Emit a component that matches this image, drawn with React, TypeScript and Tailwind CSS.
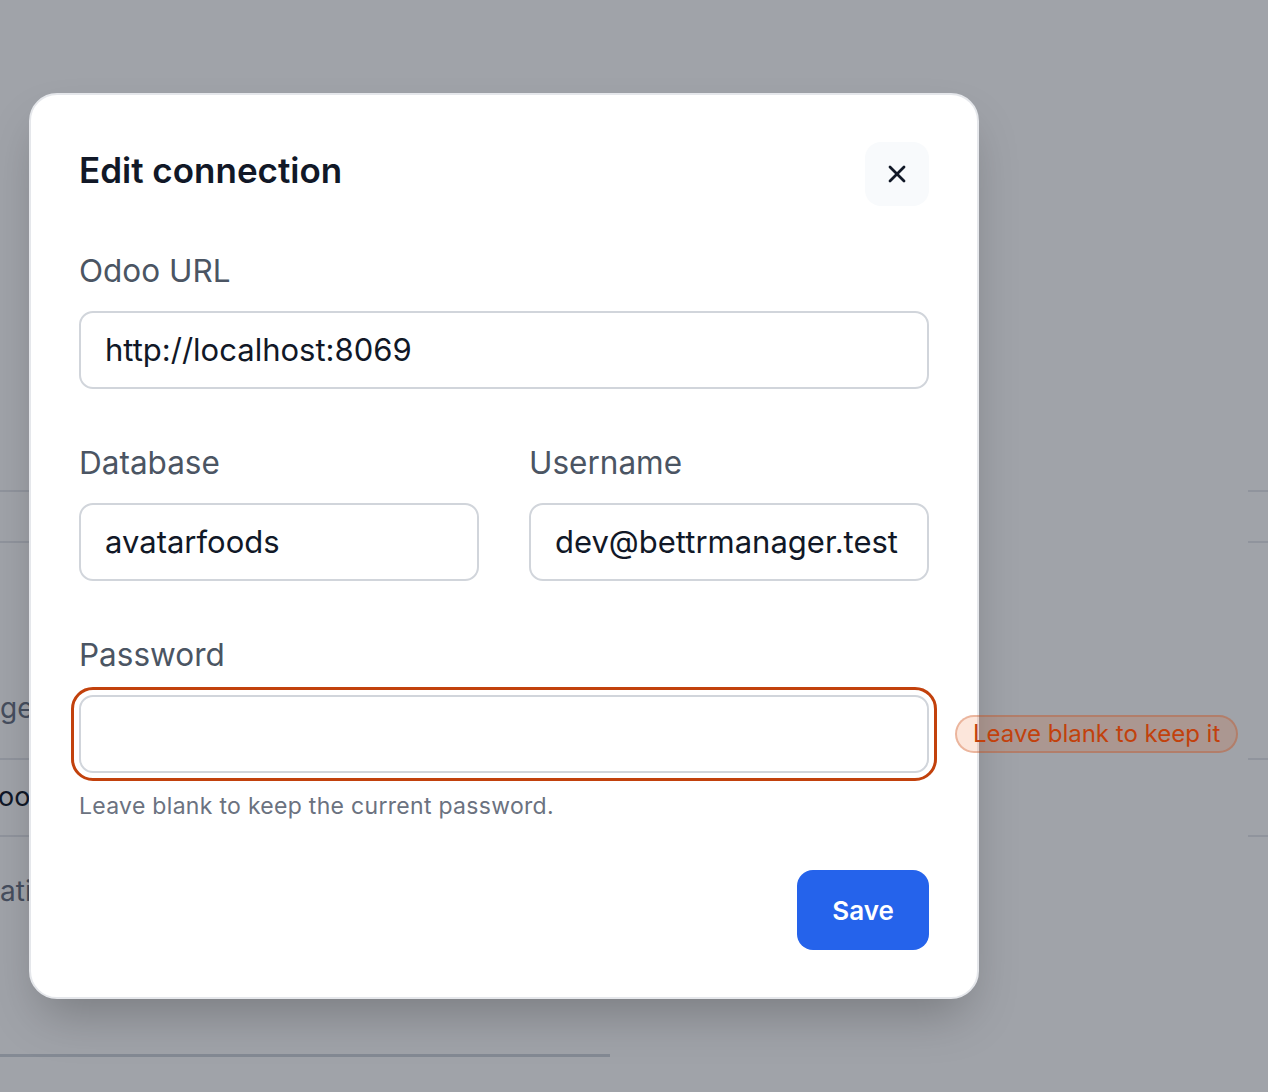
import React from "react";
import { X } from "lucide-react";

const font = { fontFamily: "Inter, 'Noto Sans', sans-serif" };

const Field = ({ label, value, className = "" }: { label: string; value: string; className?: string }) => (
  <div className={`flex flex-col ${className}`}>
    <label className="text-[31.5px] leading-[36px] text-[#4b5563] mb-[22px]">{label}</label>
    <div className="h-[78px] rounded-[14px] border-2 border-[#d1d5db] bg-white px-[24px] flex items-center text-[31px] text-[#111827]">
      {value}
    </div>
  </div>
);

export default function App() {
  return (
    <div className="relative w-[1268px] h-[1092px] overflow-hidden bg-white" style={font}>
      {/* page underneath */}
      <div className="flex justify-between pt-[490px]">
        <div className="w-[610px] flex flex-col">
          <div className="h-[51px] border-t-2 border-gray-200" />
          <div className="h-[217px] border-t-2 border-gray-200 flex items-center text-[28px] text-gray-500 pt-[115px]">
            ge
          </div>
          <div className="h-[77px] border-t-2 border-gray-200 flex items-center text-[27px] text-gray-900 -ml-[2px]">
            oo
          </div>
          <div className="h-[110px] border-t-2 border-gray-200 flex items-center text-[28px] text-gray-500">
            ation
          </div>
          <div className="h-[112px] border-b-[3px] border-gray-300" />
        </div>
        <div className="w-[20px] flex flex-col">
          <div className="h-[51px] border-t-2 border-gray-200" />
          <div className="h-[217px] border-t-2 border-gray-200" />
          <div className="h-[77px] border-t-2 border-gray-200" />
          <div className="h-[110px] border-t-2 border-gray-200" />
        </div>
      </div>

      {/* overlay */}
      <div className="absolute inset-0 bg-[#111827]/40 pt-[93px] pl-[29px]">
        <div className="relative w-[950px] h-[906px] rounded-[28px] border-2 border-[#e5e7eb] bg-white shadow-2xl px-[48px] pt-[47px]">
          <div className="flex items-start justify-between">
            <h2 className="text-[35px] leading-[56px] font-semibold text-[#111827]">Edit connection</h2>
            <button className="w-[64px] h-[64px] rounded-[16px] bg-[#f8fafc] flex items-center justify-center text-[#111827]">
              <X size={28} strokeWidth={2.4} />
            </button>
          </div>

          <Field label="Odoo URL" value="http://localhost:8069" className="mt-[47px]" />

          <div className="grid grid-cols-2 gap-x-[50px] mt-[56px]">
            <Field label="Database" value="avatarfoods" />
            <Field label="Username" value="dev@bettrmanager.test" />
          </div>

          <div className="flex flex-col mt-[56px]">
            <label className="text-[31.5px] leading-[36px] text-[#4b5563] mb-[22px]">Password</label>
            <div className="relative">
              <div className="h-[78px] rounded-[14px] border-2 border-[#d1d5db] bg-white outline-[3px] outline-solid outline-[#c2410c] outline-offset-[5px]" />
              <span className="absolute left-[876px] top-[20px] whitespace-nowrap rounded-full border-2 border-[#c2410c]/30 bg-[#ea580c]/15 px-[16px] h-[38px] flex items-center text-[24px] text-[#c2410c]">
                Leave blank to keep it
              </span>
            </div>
            <p className="mt-[18px] text-[23px] leading-[30px] text-[#6b7280] tracking-[0.3px]">
              Leave blank to keep the current password.
            </p>
          </div>

          <div className="flex justify-end mt-[49px]">
            <button className="w-[132px] h-[80px] rounded-[16px] bg-[#2563eb] text-white text-[26px] font-semibold">
              Save
            </button>
          </div>
        </div>
      </div>
    </div>
  );
}
